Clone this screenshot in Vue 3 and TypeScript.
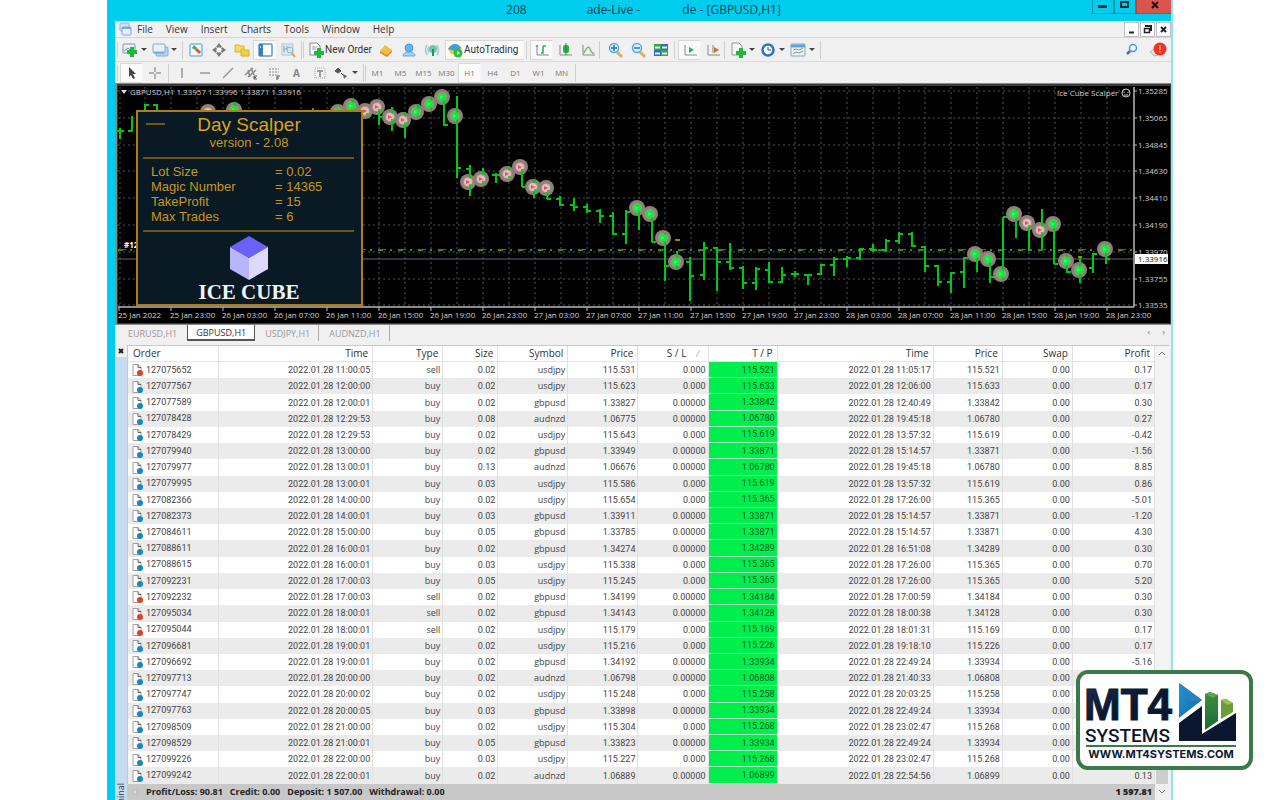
<script setup lang="ts">
import { ref } from 'vue'

interface Deal {
  order: string
  open: string
  type: string
  size: string
  symbol: string
  price: string
  sl: string
  tp: string
  close: string
  profit: string
}

const menus = ['File', 'View', 'Insert', 'Charts', 'Tools', 'Window', 'Help']
const periods = ['M1', 'M5', 'M15', 'M30', 'H1', 'H4', 'D1', 'W1', 'MN']
const activePeriod = ref('H1')
const tabs = ['EURUSD,H1', 'GBPUSD,H1', 'USDJPY,H1', 'AUDNZD,H1']
const activeTab = ref('GBPUSD,H1')

const columns = [
  { name: 'Order', width: 91 },
  { name: 'Time', width: 154 },
  { name: 'Type', width: 70 },
  { name: 'Size', width: 55 },
  { name: 'Symbol', width: 70 },
  { name: 'Price', width: 70 },
  { name: 'S / L', width: 70 },
  { name: 'T / P', width: 69 },
  { name: 'Time', width: 156 },
  { name: 'Price', width: 69 },
  { name: 'Swap', width: 70 },
  { name: 'Profit', width: 82 },
]

const raw = `127075652|11:00:05|sell|0.02|usdjpy|115.531|115.521|11:05:17|0.17
127077567|12:00:00|buy|0.02|usdjpy|115.623|115.633|12:06:00|0.17
127077589|12:00:01|buy|0.02|gbpusd|1.33827|1.33842|12:40:49|0.30
127078428|12:29:53|buy|0.08|audnzd|1.06775|1.06780|19:45:18|0.27
127078429|12:29:53|buy|0.02|usdjpy|115.643|115.619|13:57:32|-0.42
127079940|13:00:00|buy|0.02|gbpusd|1.33949|1.33871|15:14:57|-1.56
127079977|13:00:01|buy|0.13|audnzd|1.06676|1.06780|19:45:18|8.85
127079995|13:00:01|buy|0.03|usdjpy|115.586|115.619|13:57:32|0.86
127082366|14:00:00|buy|0.02|usdjpy|115.654|115.365|17:26:00|-5.01
127082373|14:00:01|buy|0.03|gbpusd|1.33911|1.33871|15:14:57|-1.20
127084611|15:00:00|buy|0.05|gbpusd|1.33785|1.33871|15:14:57|4.30
127088611|16:00:01|buy|0.02|gbpusd|1.34274|1.34289|16:51:08|0.30
127088615|16:00:01|buy|0.03|usdjpy|115.338|115.365|17:26:00|0.70
127092231|17:00:03|buy|0.05|usdjpy|115.245|115.365|17:26:00|5.20
127092232|17:00:03|sell|0.02|gbpusd|1.34199|1.34184|17:00:59|0.30
127095034|18:00:01|sell|0.02|gbpusd|1.34143|1.34128|18:00:38|0.30
127095044|18:00:01|sell|0.02|usdjpy|115.179|115.169|18:01:31|0.17
127096681|19:00:01|buy|0.02|usdjpy|115.216|115.226|19:18:10|0.17
127096692|19:00:01|buy|0.02|gbpusd|1.34192|1.33934|22:49:24|-5.16
127097713|20:00:00|buy|0.02|audnzd|1.06798|1.06808|21:40:33|
127097747|20:00:02|buy|0.02|usdjpy|115.248|115.258|20:03:25|
127097763|20:00:05|buy|0.03|gbpusd|1.33898|1.33934|22:49:24|
127098509|21:00:00|buy|0.02|usdjpy|115.304|115.268|23:02:47|
127098529|21:00:01|buy|0.05|gbpusd|1.33823|1.33934|22:49:24|
127099226|22:00:00|buy|0.03|usdjpy|115.227|115.268|23:02:47|
127099242|22:00:01|buy|0.02|audnzd|1.06889|1.06899|22:54:56|0.13`

const deals: Deal[] = raw.split('\n').map((line) => {
  const [order, open, type, size, symbol, price, tp, close, profit] = line.split('|')
  return {
    order,
    open: '2022.01.28 ' + open,
    type,
    size,
    symbol,
    price,
    sl: symbol === 'usdjpy' ? '0.000' : '0.00000',
    tp,
    close: '2022.01.28 ' + close,
    profit,
  }
})

const verticals = Array.from({ length: 39 }, (_, i) => Math.round(119.5 + i * 25.98))
const horizontals = [91, 118, 145, 171, 198, 225, 252, 279, 305]
const priceLabels = ['1.35285', '1.35065', '1.34845', '1.34630', '1.34410', '1.34190', '1.33970', '1.33755', '1.33535']
const timeLabels = [
  '25 Jan 2022', '25 Jan 23:00', '26 Jan 03:00', '26 Jan 07:00', '26 Jan 11:00', '26 Jan 15:00', '26 Jan 19:00',
  '26 Jan 23:00', '27 Jan 03:00', '27 Jan 07:00', '27 Jan 11:00', '27 Jan 15:00', '27 Jan 19:00', '27 Jan 23:00',
  '28 Jan 03:00', '28 Jan 07:00', '28 Jan 11:00', '28 Jan 15:00', '28 Jan 19:00', '28 Jan 23:00',
]

// x, high, low, open, close (0 leaves the tick out)
const bars: number[][] = [
  [120, 128, 139, 131, 131], [132, 116, 131, 131, 0], [145, 104, 112, 0, 105], [157, 104, 111, 105, 0],
  [235, 102, 112, 0, 0], [313, 108, 112, 0, 0], [353, 99, 112, 0, 0], [379, 105, 125, 0, 117], [392, 107, 131, 0, 121],
  [405, 112, 138, 0, 0], [418, 104, 117, 0, 0], [431, 97, 110, 0, 0], [444, 94, 126, 0, 125],
  [457, 96, 178, 0, 168], [470, 165, 196, 169, 0], [483, 168, 184, 0, 0], [496, 173, 183, 175, 175],
  [509, 166, 178, 0, 0], [522, 163, 187, 0, 187], [534, 180, 198, 0, 0], [547, 184, 199, 0, 199],
  [560, 196, 206, 199, 205], [574, 198, 211, 205, 207], [587, 204, 213, 207, 211], [600, 209, 223, 211, 216],
  [613, 212, 235, 216, 234], [626, 210, 244, 234, 212], [639, 205, 230, 0, 0], [652, 213, 242, 0, 242],
  [665, 233, 281, 0, 266], [677, 251, 269, 0, 0], [690, 257, 301, 262, 276], [704, 242, 280, 275, 248],
  [717, 247, 291, 248, 262], [730, 243, 270, 262, 268], [743, 266, 289, 268, 283], [756, 267, 290, 283, 269],
  [769, 262, 283, 270, 282], [782, 267, 283, 282, 275], [795, 271, 277, 274, 274], [808, 274, 285, 275, 275],
  [821, 264, 275, 274, 265], [834, 257, 276, 265, 259], [847, 256, 267, 259, 258], [860, 248, 260, 258, 249],
  [873, 244, 252, 249, 250], [886, 239, 252, 250, 241], [899, 232, 244, 241, 234], [912, 232, 247, 234, 246],
  [925, 246, 272, 247, 266], [938, 265, 286, 266, 282], [951, 272, 293, 282, 273], [964, 257, 288, 272, 258],
  [977, 252, 272, 0, 0], [990, 258, 283, 0, 277], [1003, 217, 280, 0, 217], [1016, 210, 238, 0, 0],
  [1029, 220, 251, 0, 0], [1042, 209, 249, 0, 0], [1054, 222, 264, 0, 264], [1067, 255, 273, 0, 272],
  [1080, 257, 283, 0, 0], [1093, 253, 273, 268, 254], [1106, 244, 264, 0, 259],
]
const barPath = bars
  .map(([x, h, l, o, c]) => `M${x} ${h}V${l}` + (o ? `M${x - 4} ${o}H${x}` : '') + (c ? `M${x} ${c}H${x + 4}` : ''))
  .join('')

// x, y, 1 when the trade was a sell
const marks: number[][] = [
  [208, 112, 1], [234, 110, 0], [338, 112, 0], [351, 106, 0], [365, 111, 1], [377, 107, 1], [390, 117, 1], [403, 120, 1],
  [416, 112, 0], [429, 104, 0], [442, 97, 0], [455, 116, 0], [468, 182, 1], [481, 179, 1], [507, 174, 1], [520, 167, 1],
  [533, 187, 1], [546, 188, 1], [637, 208, 0], [650, 214, 0], [663, 238, 0], [676, 262, 0], [975, 254, 0], [988, 259, 0],
  [1001, 274, 0], [1014, 214, 0], [1027, 223, 1], [1040, 230, 1], [1053, 224, 0], [1066, 261, 0], [1079, 270, 0],
  [1105, 249, 0],
]

const settings = [
  ['Lot Size', '= 0.02'],
  ['Magic Number', '= 14365'],
  ['TakeProfit', '= 15'],
  ['Max Trades', '= 6'],
]
</script>

<template>
  <div class="page">
    <main class="window">
      <header class="titlebar">
        <div class="title"><span>208</span><span>ade-Live -</span><span>de - [GBPUSD,H1]</span></div>
        <div class="winbtns">
          <button aria-label="Minimize"><svg width="12" height="10"><path d="M1 6.5H10" stroke="#04303c" stroke-width="3" /></svg></button>
          <button aria-label="Maximize"><svg width="12" height="10"><rect x="2" y="2" width="7" height="5" fill="none" stroke="#04303c" stroke-width="2" /></svg></button>
          <button class="close" aria-label="Close"><svg width="12" height="10"><path d="M3 2L9 8M9 2L3 8" stroke="#200808" stroke-width="2" /></svg></button>
        </div>
      </header>

      <nav class="menubar">
        <svg class="appicon" width="14" height="14"><rect x="2" y="1" width="9" height="8" rx="1" fill="#cfe2f8" stroke="#8fb4e4" /><rect x="4" y="5" width="9" height="8" rx="1" fill="#e8f2fd" stroke="#7ba6e0" /><path d="M4 6H13" stroke="#7ba6e0" stroke-width="2" /></svg>
        <button v-for="m in menus" :key="m">{{ m }}</button>
        <div class="mdi">
          <button aria-label="Minimize chart"><svg width="11" height="11"><path d="M3 8.5H8" stroke="#222" stroke-width="2" /></svg></button>
          <button aria-label="Restore chart"><svg width="11" height="11"><path d="M4 3V2H9V6H8" fill="none" stroke="#222" stroke-width="2" /><rect x="2.500" y="4.500" width="5" height="4" fill="none" stroke="#222" stroke-width="1.500" /></svg></button>
          <button aria-label="Close chart"><svg width="11" height="11"><path d="M3 3L8 8M8 3L3 8" stroke="#222" stroke-width="2" /></svg></button>
        </div>
      </nav>

      <div class="toolbar first">
        <i class="grip"></i>
        <button class="drop" aria-label="New chart"><svg width="20" height="18"><rect x="3" y="3" width="12" height="9" rx="1" fill="#e9f1f8" stroke="#7596b6" /><path d="M4 10L8 7L10 9" fill="none" stroke="#7596b6" /><path d="M10 6H14V9H17V13H14V16H10V13H7V9H10Z" fill="#22b63a" /></svg><b></b></button>
        <button class="drop" aria-label="Profiles"><svg width="20" height="18"><rect x="6" y="6" width="12" height="9" rx="1" fill="#b8d4ef" stroke="#7fabd6" /><rect x="3" y="3" width="12" height="9" rx="1" fill="#e6f1fb" stroke="#7fabd6" /><path d="M4 11.500H14" stroke="#7fabd6" stroke-width="2" /></svg><b></b></button>
        <i class="sep"></i>
        <button aria-label="Market watch"><svg width="18" height="18"><rect x="3" y="3" width="12" height="12" rx="1" fill="#f3f9ff" stroke="#7ab8e4" stroke-width="1.500" /><path d="M5 7L7 4L10 7L8 9Z" fill="#38b44a" /><path d="M9 8L13 12" stroke="#e25b33" stroke-width="3" /></svg></button>
        <button aria-label="Data window"><svg width="18" height="18"><path d="M9 2L12 6H6ZM9 16L6 12H12ZM2 9L6 6V12ZM16 9L12 12V6Z" fill="#777" /><circle cx="9" cy="9" r="3" fill="#fff" stroke="#999" /></svg></button>
        <button aria-label="Navigator"><svg width="18" height="18"><path d="M2 4H6L7 5H11V11H2Z" fill="#f4dc62" stroke="#d4b040" /><path d="M8 8H11L12 9H16V15H8Z" fill="#f2ce3e" stroke="#d4b040" /></svg></button>
        <button class="on" aria-label="Terminal"><svg width="18" height="18"><rect x="3" y="3" width="13" height="12" rx="1" fill="#fff" stroke="#5a97cc" stroke-width="1.500" /><rect x="3" y="3" width="4" height="12" fill="#3c7dbb" /><path d="M4.500 5V7" stroke="#c9e2f7" /></svg></button>
        <button aria-label="Strategy tester"><svg width="18" height="18"><rect x="3" y="3" width="11" height="11" fill="#dbe8f2" stroke="#b3c6d6" /><path d="M5 5V11M8 5V9M5 8H10" stroke="#8aa2b6" /><circle cx="11" cy="9" r="3" fill="#cfe5f7" stroke="#8fb4d4" /><path d="M13 12L16 16" stroke="#d9a83c" stroke-width="2" /></svg></button>
        <i class="sep"></i><i class="grip tight"></i>
        <button class="text" aria-label="New Order"><svg width="19" height="18"><path d="M4 2H11L14 5V14H4Z" fill="#fff" stroke="#8a8a8a" /><path d="M6 6H11M6 8H10" stroke="#999" /><path d="M11 7H15V10H18V14H15V17H11V14H8V10H11Z" fill="#22b63a" /></svg>New Order</button>
        <button aria-label="MetaEditor"><svg width="18" height="18"><path d="M3 10L8 4L15 9L10 14Z" fill="#f5bd45" /><path d="M3 10V12L10 16L15 11V9L10 14Z" fill="#d98a1d" /></svg></button>
        <button aria-label="Options"><svg width="18" height="18"><circle cx="9" cy="7" r="4" fill="#63b5ef" stroke="#4c98d6" /><path d="M3 15Q3 11 9 11T15 15Z" fill="#a6d2f3" stroke="#6fabdc" /></svg></button>
        <button aria-label="Signals"><svg width="18" height="18"><path d="M4 4Q1 9 4 14M6 6Q4 9 6 12M14 4Q17 9 14 14" fill="none" stroke="#a9c6cc" stroke-width="1.500" /><circle cx="10" cy="8" r="4" fill="#6ec6b0" /><path d="M10 8V15" stroke="#1f9a4a" stroke-width="2" /></svg></button>
        <button class="text auto on" aria-label="AutoTrading"><svg width="18" height="18"><path d="M2 8L9 4L16 7L14 13H5Z" fill="#f2c739" /><path d="M2 8Q5 3 9 3Q13 3 15 7L9 10Z" fill="#3c9fd6" /><circle cx="12" cy="12" r="4.500" fill="#2cc13a" /><path d="M11 10L14 12L11 14Z" fill="#fff" /></svg>AutoTrading</button>
        <i class="sep wide"></i>
        <button class="on" aria-label="Bar chart"><svg width="18" height="18"><path d="M4 4V14H16M4 4L3 6M4 4L5 6" fill="none" stroke="#888" /><path d="M8 12H10V5M10 5H13" fill="none" stroke="#2fae4b" stroke-width="1.500" /></svg></button>
        <button aria-label="Candlesticks"><svg width="18" height="18"><path d="M4 4V14H16" fill="none" stroke="#888" /><rect x="7" y="4" width="6" height="8" rx="2" fill="#27b445" /><path d="M10 2V14" stroke="#178c31" /></svg></button>
        <button aria-label="Line chart"><svg width="18" height="18"><path d="M4 4V14H16" fill="none" stroke="#888" /><path d="M5 12Q9 3 11 8T15 12" fill="none" stroke="#7ab388" stroke-width="1.500" /></svg></button>
        <i class="sep mid"></i>
        <button aria-label="Zoom in"><svg width="18" height="18"><path d="M11 11L16 16" stroke="#d9b35c" stroke-width="3" /><circle cx="8" cy="7" r="4.500" fill="#d7edfc" stroke="#5fa9dc" stroke-width="1.500" /><path d="M5 7H11M8 4V10" stroke="#2378b8" stroke-width="1.500" /></svg></button>
        <button aria-label="Zoom out"><svg width="18" height="18"><path d="M11 11L16 16" stroke="#d9b35c" stroke-width="3" /><circle cx="8" cy="7" r="4.500" fill="#d7edfc" stroke="#5fa9dc" stroke-width="1.500" /><path d="M5 7H11" stroke="#2378b8" stroke-width="1.500" /></svg></button>
        <button aria-label="Tile windows"><svg width="18" height="18"><rect x="2" y="3" width="7" height="6" fill="#3aa446" /><rect x="9" y="3" width="7" height="6" fill="#2f6fc0" /><rect x="2" y="9" width="7" height="6" fill="#2f6fc0" /><rect x="9" y="9" width="7" height="6" fill="#3aa446" /><path d="M3 6.500H8M10 6.500H15M3 12.500H8M10 12.500H15" stroke="#eaf6ea" stroke-width="2" /></svg></button>
        <i class="sep wide"></i>
        <button class="on" aria-label="Auto scroll"><svg width="18" height="18"><path d="M4 4V14H16" fill="none" stroke="#888" /><path d="M8 6L13 9L8 12Z" fill="#2db44a" /></svg></button>
        <button aria-label="Chart shift"><svg width="18" height="18"><path d="M4 4V14H16M9 4V12" fill="none" stroke="#888" /><path d="M15 9L10 6V12Z" fill="#d86b3c" /></svg></button>
        <i class="sep mid"></i>
        <button class="drop" aria-label="Indicators"><svg width="20" height="18"><path d="M4 2H11L14 5V14H4Z" fill="#f4f4f4" stroke="#999" /><path d="M11 7H15V10H18V14H15V17H11V14H8V10H11Z" fill="#22b63a" /></svg><b></b></button>
        <button class="drop" aria-label="Periods"><svg width="20" height="18"><circle cx="10" cy="9" r="5.500" fill="#f5faff" stroke="#2f74c2" stroke-width="2.500" /><path d="M10 6V9H13" fill="none" stroke="#555" /></svg><b></b></button>
        <button class="drop" aria-label="Templates"><svg width="20" height="18"><rect x="3" y="3" width="14" height="12" rx="1" fill="#edf5fa" stroke="#78a9cc" /><path d="M3 5H17" stroke="#67a0cc" stroke-width="3" /><path d="M5 9L8 8L11 9L15 7" fill="none" stroke="#c4826a" /><path d="M5 13L8 11L11 12L15 10" fill="none" stroke="#5faa70" /></svg><b></b></button>
        <i class="sep"></i>
        <div class="right">
          <button aria-label="Search"><svg width="18" height="18"><circle cx="11" cy="7" r="3.500" fill="#eef5ff" stroke="#5f8fd6" stroke-width="1.500" /><path d="M8 10L5 13" stroke="#3d6fc2" stroke-width="2.500" /></svg></button>
          <button aria-label="Notifications"><svg width="22" height="18"><path d="M3 11L7 8L12 14L7 15Z" fill="#ddd" stroke="#bbb" /><circle cx="13" cy="8" r="6.500" fill="#ee3322" /><path d="M13 4V9M13 10V11.500" stroke="#ff9d92" stroke-width="1.500" /></svg></button>
        </div>
      </div>

      <div class="toolbar second">
        <i class="grip"></i>
        <button class="on" aria-label="Cursor"><svg width="18" height="18"><path d="M6 3L13 10H10L12 14L10 15L8 11L6 13Z" fill="#444" /></svg></button>
        <button aria-label="Crosshair"><svg width="18" height="18"><path d="M9 3V8M9 10V15M3 9H8M10 9H15" stroke="#999" stroke-width="1.500" /></svg></button>
        <i class="sep"></i>
        <button aria-label="Vertical line"><svg width="18" height="18"><path d="M9 4V14" stroke="#999" stroke-width="1.500" /></svg></button>
        <button aria-label="Horizontal line"><svg width="18" height="18"><path d="M4 9H14" stroke="#999" stroke-width="1.500" /></svg></button>
        <button aria-label="Trendline"><svg width="18" height="18"><path d="M4 14L14 4" stroke="#999" stroke-width="1.500" /></svg></button>
        <button aria-label="Channel"><svg width="18" height="18"><path d="M3 11L11 4M6 13L14 6M6 6L8 13M9 4L12 11" stroke="#888" stroke-width="1.500" /><path d="M15 12H12V15H15M12 13.500H14" fill="none" stroke="#555" /></svg></button>
        <button aria-label="Fibonacci"><svg width="18" height="18"><path d="M4 5H14M4 8H14M4 11H12" stroke="#aaa" stroke-dasharray="2 1" stroke-width="1.500" /><path d="M12 16V12H15M12 14H14" fill="none" stroke="#555" /></svg></button>
        <button class="letter">A</button>
        <button aria-label="Text label"><svg width="18" height="18"><rect x="4" y="4" width="10" height="10" fill="none" stroke="#aaa" stroke-dasharray="1 1" /><path d="M6 7H12M9 7V13" stroke="#888" stroke-width="1.500" /></svg></button>
        <button class="drop" aria-label="Arrows"><svg width="20" height="18"><path d="M4 7L7 4L10 7L7 9ZM10 9L13 12" fill="#555" stroke="#555" /><path d="M12 10L16 12L13 15Z" fill="#666" /></svg><b></b></button>
        <i class="sep"></i><i class="grip tight"></i>
        <button v-for="p in periods" :key="p" class="period" :class="{ on: p === activePeriod }" @click="activePeriod = p">{{ p }}</button>
        <i class="sep"></i>
      </div>

      <section class="chart" aria-label="GBPUSD H1 chart">
        <svg viewBox="115 83 1056 242">
          <rect x="115" y="83" width="1056" height="242" fill="#8a8a8a" />
          <rect x="117" y="84" width="1054" height="240" fill="#3a3a3a" />
          <rect x="118" y="86" width="1052" height="237" fill="#000" />
          <path v-for="x in verticals" :key="x" :d="`M${x} 87V306`" stroke="#48555f" stroke-dasharray="2 3" />
          <path v-for="y in horizontals" :key="y" :d="`M118 ${y}H1133`" stroke="#48555f" stroke-dasharray="2 3" />
          <path d="M118 259H1133" stroke="#5b6875" />
          <path d="M118 249.500H1133" stroke="#c23a12" stroke-dasharray="8 4 2 6" />
          <path d="M118 250.500H1133" stroke="#4c8a22" stroke-dasharray="5 7 2 6" />
          <path d="M118 307H1134M1134 87V307" stroke="#b8b8b8" stroke-width="1.500" fill="none" />
          <path :d="timeLabels.map((_, i) => `M${119 + i * 52} 307V311`).join('')" stroke="#b8b8b8" />
          <path :d="horizontals.map((y) => `M1134 ${y}H1137`).join('')" stroke="#b8b8b8" />
          <g class="axis">
            <text v-for="(t, i) in priceLabels" :key="t" x="1138" :y="horizontals[i] + 3">{{ t }}</text>
            <text v-for="(t, i) in timeLabels" :key="t" :x="118 + i * 52" y="318">{{ t }}</text>
            <text x="130" y="95">GBPUSD,H1 1.33957 1.33996 1.33871 1.33916</text>
            <text x="1057" y="96">Ice Cube Scalper</text>
            <text x="124" y="248" class="tag">#12</text>
          </g>
          <path d="M121 90H127L124 94Z" fill="#ddd" />
          <circle cx="1126" cy="93" r="4" fill="none" stroke="#ccc" /><path d="M1124 92V93M1128 92V93M1124 95H1128" stroke="#ccc" />
          <rect x="1135" y="254" width="33" height="10" fill="#fff" />
          <text class="bid" x="1138" y="262">1.33916</text>
          <g v-for="m in marks" :key="m[0]"><circle :cx="m[0]" :cy="m[1]" r="8" fill="#8d8079" /><circle :cx="m[0]" :cy="m[1]" r="5" fill="#a3958c" /></g>
          <path :d="barPath" stroke="#00c814" stroke-width="2" fill="none" />
          <g v-for="m in marks" :key="m[0] + 'd'">
            <circle :cx="m[0]" :cy="m[1]" r="4" :fill="m[2] ? '#f0b8b8' : '#12e83a'" />
            <path :d="`M${m[0] - 2} ${m[1] - 2}L${m[0] + 2} ${m[1]}L${m[0] - 2} ${m[1] + 2}Z`" :fill="m[2] ? '#e0507a' : '#3df070'" />
            <path v-if="m[2]" :d="`M${m[0] + 1} ${m[1] + 3}h3`" stroke="#20d030" stroke-width="2" />
          </g>
          <path d="M675 240H680M1078 257H1082" stroke="#8c8c10" stroke-width="2" />

          <rect x="137" y="111" width="225" height="194" fill="#0a1a25" stroke="#b07c16" stroke-width="2" />
          <path d="M146 124H165M143 158H354M143 231H354" stroke="#8f6a18" stroke-width="1.500" />
          <g class="panel">
            <text class="name" x="249" y="131" text-anchor="middle">Day Scalper</text>
            <text x="249" y="147" text-anchor="middle">version - 2.08</text>
            <template v-for="(s, i) in settings" :key="s[0]">
              <text x="151" :y="176 + i * 15">{{ s[0] }}</text>
              <text x="275" :y="176 + i * 15">{{ s[1] }}</text>
            </template>
            <text class="brand" x="249" y="299" text-anchor="middle">ICE CUBE</text>
          </g>
          <path d="M249 236L268 247L249 258L230 247Z" fill="#6a60fa" />
          <path d="M230 247L249 258V280L230 269Z" fill="#b9b5fb" />
          <path d="M268 247L249 258V280L268 269Z" fill="#dcd9fd" />
        </svg>
      </section>

      <div class="tabs">
        <button v-for="t in tabs" :key="t" :class="{ active: t === activeTab }" @click="activeTab = t">{{ t }}</button>
        <div class="scrolltabs"><span>‹</span><span>›</span></div>
      </div>

      <section class="terminal">
        <aside>
          <button aria-label="Close terminal"><svg width="8" height="8"><path d="M2 2L6 6M6 2L2 6" stroke="#222" stroke-width="2" /></svg></button>
          <span>Terminal</span>
        </aside>
        <div class="content">
          <div class="tablewrap">
            <table>
              <colgroup><col v-for="(c, i) in columns" :key="i" :style="{ width: c.width + 'px' }" /></colgroup>
              <thead>
                <tr><th v-for="(c, i) in columns" :key="i">{{ c.name }}<i v-if="i === 6">/</i></th></tr>
              </thead>
              <tbody>
                <tr v-for="d in deals" :key="d.order">
                  <td>
                    <svg width="13" height="14" viewBox="0 0 13 14"><path d="M2 1.500H7L10 4.500V12.500H2Z" fill="#fff" stroke="#a0a0a0" /><path d="M7 1.500V4.500H10" fill="none" stroke="#666" /><circle cx="9" cy="10" r="3" :fill="d.type === 'sell' ? '#e0431f' : '#1688c4'" /></svg>{{ d.order }}
                  </td>
                  <td>{{ d.open }}</td>
                  <td class="word">{{ d.type }}</td>
                  <td>{{ d.size }}</td>
                  <td class="word">{{ d.symbol }}</td>
                  <td>{{ d.price }}</td>
                  <td>{{ d.sl }}</td>
                  <td class="tp">{{ d.tp }}</td>
                  <td>{{ d.close }}</td>
                  <td>{{ d.tp }}</td>
                  <td>0.00</td>
                  <td>{{ d.profit }}</td>
                </tr>
              </tbody>
            </table>
            <div class="scroll">
              <svg width="14" height="14"><path d="M4 9L7 6L10 9" fill="none" stroke="#777" /></svg>
              <i></i>
            </div>
          </div>
          <footer>
            <svg width="8" height="8"><circle cx="4" cy="4" r="2.500" fill="#ddd" stroke="#b0b0b0" /></svg>
            <span>Profit/Loss: 90.81</span><span>Credit: 0.00</span><span>Deposit: 1 507.00</span><span>Withdrawal: 0.00</span>
            <strong>1 597.81</strong>
            <svg class="down" width="14" height="16"><path d="M4 6L7 9L10 6" fill="none" stroke="#777" /></svg>
          </footer>
        </div>
      </section>
    </main>

    <a class="logo" href="#" aria-label="MT4 Systems">
      <svg width="177" height="100" viewBox="1076 670 177 100">
        <defs>
          <linearGradient id="navy" x1="0" y1="0" x2="1" y2="1"><stop offset="0" stop-color="#1d3352" /><stop offset="0.500" stop-color="#0b1730" /></linearGradient>
          <linearGradient id="blue" x1="0" y1="0" x2="1" y2="1"><stop offset="0" stop-color="#1e9ad6" /><stop offset="1" stop-color="#1663a8" /></linearGradient>
          <linearGradient id="green" x1="0" y1="0" x2="0" y2="1"><stop offset="0" stop-color="#3f8f3f" /><stop offset="1" stop-color="#1c6a34" /></linearGradient>
        </defs>
        <rect x="1078" y="672" width="173" height="96" rx="10" fill="#fff" stroke="#3a7a49" stroke-width="4" />
        <text class="mt4" x="1084" y="720" fill="url(#navy)">MT4</text>
        <text class="systems" x="1085" y="742">SYSTEMS</text>
        <path d="M1086 746H1236" stroke="#3a7a49" stroke-width="2" />
        <text class="site" x="1161" y="758" text-anchor="middle">WWW.MT4SYSTEMS.COM</text>
        <path d="M1179 683L1202 700L1179 718Z" fill="url(#blue)" />
        <path d="M1179 683L1202 700L1190 701Z" fill="#2d7fc0" />
        <path d="M1179 723L1202 706V734L1236 713V741H1179Z" fill="#0b1730" />
        <path d="M1205 694L1210 692L1218 695V721L1205 730Z" fill="url(#green)" />
        <path d="M1205 694L1210 692L1218 695L1213 698Z" fill="#57a84e" />
        <path d="M1221 700L1226 699L1233 703V712L1221 719Z" fill="#6a9c3a" />
        <path d="M1221 700L1226 699L1233 703L1227 705Z" fill="#9abf50" />
      </svg>
    </a>
  </div>
</template>

<style>
body { margin: 0; background: #fff; }
</style>

<style scoped>
* { box-sizing: border-box; }
button { border: 0; padding: 0; margin: 0; background: none; font: inherit; color: inherit; }
svg { display: block; flex: none; }
.page { position: relative; height: 100vh; overflow: hidden; display: grid; grid-template-columns: minmax(0, 107fr) minmax(0, 1066fr) minmax(0, 107fr); grid-template-rows: 100%; font-family: "Open Sans", "Noto Sans", sans-serif; font-size: 10px; color: #333; }
.window { grid-column: 2; display: flex; flex-direction: column; min-height: 0; background: #f0f0f0; border-left: 8px solid #00cdee; border-right: 2px solid #8fe3f4; overflow: hidden; }

.titlebar { flex: none; height: 21px; margin: 0 -2px 0 -8px; background: #00cdee; display: flex; justify-content: flex-end; align-items: flex-start; }
.title { flex: 1; display: flex; justify-content: center; font-size: 12px; line-height: 19px; color: #08414e; padding-left: 88px; white-space: pre; }
.title span:nth-child(1) { margin-right: 60px; }
.title span:nth-child(2) { margin-right: 42px; }
.winbtns { display: flex; }
.winbtns button { width: 22px; height: 14px; display: flex; justify-content: center; border: 1px solid #0795ad; border-top: 0; }
.winbtns .close { width: 37px; background: #d9564c; border-color: #b5463f; }

.menubar { flex: none; height: 17px; display: flex; align-items: center; gap: 13px; padding-left: 3px; border-bottom: 1px solid #d5d5d5; }
.appicon { margin-right: -8px; }
.mdi { margin-left: auto; display: flex; gap: 1px; }
.mdi button { width: 15px; height: 15px; background: #fff; border: 1px solid #c0c0c0; display: flex; align-items: center; justify-content: center; }

.toolbar { flex: none; display: flex; align-items: center; }
.first { height: 23px; }
.second { height: 22px; border-top: 1px solid #dcdcdc; }
.toolbar button { width: 23px; height: 20px; display: flex; align-items: center; justify-content: center; flex: none; }
.toolbar .on { background: #fafafa; border: 1px solid #d8d8d8; border-right-color: #f4f4f4; }
.toolbar .drop { width: 30px; justify-content: flex-start; }
.drop b { border: 3px solid transparent; border-top-color: #444; border-bottom: 0; margin-left: 1px; }
.toolbar .text { width: 68px; justify-content: flex-start; white-space: nowrap; font-family: Roboto, "Open Sans", sans-serif; }
.toolbar .auto { width: 79px; margin-left: 2px; }
.toolbar .letter { font-size: 10px; font-weight: 700; color: #888; }
.toolbar .period { font-size: 8px; color: #777; }
.grip { width: 5px; height: 16px; border-left: 1px solid #d0d0d0; margin-left: 2px; margin-right: -2px; flex: none; }
.grip.tight { width: 3px; margin: 0; }
.second .grip.tight { width: 1px; }
.sep { width: 4px; height: 18px; border-left: 1px solid #cfcfcf; flex: none; margin-left: 2px; margin-right: -2px; }
.sep.wide { margin: 0 0 0 2px; }
.sep.mid { margin: 0; }
.right { margin-left: auto; display: flex; gap: 4px; padding-right: 2px; }

.chart { flex: none; }
.chart svg { width: 100%; height: auto; }
.axis text { font-family: "Open Sans", sans-serif; font-size: 8px; fill: #d0d0d0; white-space: pre; }
.axis .tag { font-weight: 700; fill: #fff; }
.bid { font-family: "Open Sans", sans-serif; font-size: 8px; fill: #111; }
.panel text { font-family: "Liberation Sans", Arial, sans-serif; font-size: 13px; fill: #c8961c; }
.panel .name { font-size: 19px; fill: #dca01a; }
.panel .brand { font-family: "Liberation Serif", serif; font-weight: 700; font-size: 21px; fill: #f0f5fa; }

.tabs { flex: none; height: 17px; display: flex; align-items: flex-start; gap: 2px; padding-left: 5px; font-size: 9px; color: #999; }
.tabs button { height: 16px; line-height: 15px; padding: 0 8px; border-right: 1px solid #aaa; }
.tabs button:first-child { border-right: 0; }
.tabs .active { background: #fff; color: #333; border: 1px solid #555; border-top: 0; border-bottom-width: 2px; }
.scrolltabs { margin-left: auto; display: flex; gap: 12px; padding-right: 6px; color: #777; line-height: 14px; }

.terminal { flex: 1; min-height: 0; display: flex; padding-top: 3px; padding-right: 2px; }
aside { width: 12px; flex: none; background: #c9dbee; display: flex; flex-direction: column; justify-content: space-between; align-items: center; overflow: hidden; }
aside button { background: #f0f0f0; width: 12px; height: 12px; display: flex; align-items: center; justify-content: center; }
aside span { writing-mode: vertical-rl; transform: rotate(180deg); font-size: 9px; height: 17px; line-height: 12px; color: #335; display: flex; justify-content: flex-end; }
.content { flex: 1; min-width: 0; display: flex; flex-direction: column; border: 1px solid #c8c8c8; border-width: 1px 0 0 1px; }
.tablewrap { flex: 1; min-height: 0; display: flex; }
table { flex: 1; height: 100%; table-layout: fixed; border-collapse: separate; border-spacing: 0; background: #fff; }
th { padding: 0 4px 0 0; line-height: 15px; font-weight: 400; text-align: right; border-right: 1px solid #e0e0e0; border-bottom: 1px solid #e4e4e4; white-space: nowrap; }
th:first-child { text-align: left; padding-left: 5px; }
th i { color: #aaa; font-size: 9px; margin: 0 4px 0 10px; }
td { padding: 0 2px 0 0; font-family: Roboto, "Open Sans", sans-serif; font-size: 9px; line-height: 14px; text-align: right; color: #444; border-right: 1px solid #e0e0e0; white-space: nowrap; }
td.word { font-family: "Open Sans", sans-serif; }
td:first-child { text-align: left; padding-left: 3px; }
td svg { display: inline-block; vertical-align: middle; margin-right: 2px; }
tbody tr:nth-child(even) { background: #ebebeb; }
td.tp { background: #00ee4e; color: #0a5a20; border-bottom: 1px solid #a8f5bf; }
.scroll { width: 14px; flex: none; background: #f4f4f4; display: flex; flex-direction: column; justify-content: space-between; }
.scroll i { height: 100px; background: #cdcdcd; margin: 0 1px; }
footer { flex: none; height: 16px; background: #c8c8c8; display: flex; align-items: center; gap: 7px; padding-left: 3px; font-size: 9px; line-height: 14px; font-weight: 700; color: #222; white-space: nowrap; }
footer strong { margin-left: auto; }
.down { background: #f0f0f0; margin-left: -4px; }

.logo { position: absolute; right: 27px; bottom: 30px; }
.mt4 { font-family: "Liberation Sans", Arial, sans-serif; font-size: 44px; font-weight: 700; stroke: #0b1730; stroke-width: 1px; }
.systems { font-family: Roboto, "Open Sans", sans-serif; font-size: 19px; font-weight: 500; fill: #0b1730; }
.site { font-family: Inter, sans-serif; font-size: 11px; font-weight: 700; fill: #0b1730; }
</style>
